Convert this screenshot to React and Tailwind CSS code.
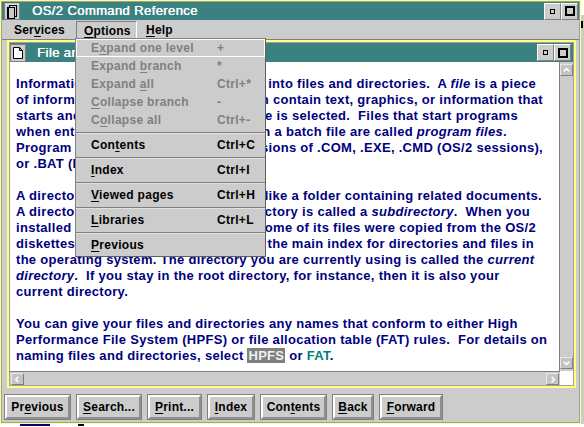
import React from "react";

const TEAL = "bg-[#3a8282]";
const YELLOW = "bg-[#ffff80]";

function U({ children }) {
  return <span className="underline underline-offset-2 decoration-1">{children}</span>;
}

function FrameButton({ big }) {
  return (
    <div className="w-[17px] h-[17px] bg-[#cccccc] border border-t-white border-l-white border-r-[#808080] border-b-[#808080] flex items-center justify-center">
      {big ? (
        <div className="w-[10px] h-[10px] border-2 border-black" />
      ) : (
        <div className="w-[5px] h-[5px] border border-black" />
      )}
    </div>
  );
}

function BookIcon() {
  return (
    <svg width="16" height="17" viewBox="0 0 16 17">
      <rect x="0.5" y="0.5" width="15" height="16" fill="#cccccc" stroke="#808080" />
      <path d="M1 1h14" stroke="#ffffff" />
      <rect x="5.5" y="2.5" width="7" height="11" fill="#cccccc" stroke="#000" />
      <rect x="3.5" y="4.5" width="7" height="11" fill="#cccccc" stroke="#000" />
      <path d="M4.5 5v10" stroke="#000" />
    </svg>
  );
}

function DocIcon() {
  return (
    <svg width="16" height="18" viewBox="0 0 16 18">
      <rect x="0.5" y="0.5" width="15" height="17" fill="#cccccc" stroke="#808080" />
      <path d="M3.5 3.5h6l3 3v8h-9z M9.5 3.5v3h3" fill="#ffffff" stroke="#000" />
    </svg>
  );
}

function ArrowBtn({ dir }) {
  const paths = {
    up: "M3 7l3-3 3 3",
    down: "M3 4l3 3 3-3",
    left: "M7 3l-3 3 3 3",
    right: "M5 3l3 3-3 3",
  };
  return (
    <div className="w-[13px] h-[12px] bg-[#c4c4c4] border border-t-[#e8e8e8] border-l-[#e8e8e8] border-r-[#808080] border-b-[#808080] flex items-center justify-center">
      <svg width="11" height="10" viewBox="0 0 12 11">
        <path d={paths[dir]} fill="none" stroke="#ffffff" strokeWidth="1.6" />
      </svg>
    </div>
  );
}

const MENU = [
  { label: <>E<U>x</U>pand one level</>, key: "+", off: true, sel: true },
  { label: <>Expand <U>b</U>ranch</>, key: "*", off: true },
  { label: <>Expand <U>a</U>ll</>, key: "Ctrl+*", off: true },
  { label: <><U>C</U>ollapse branch</>, key: "-", off: true },
  { label: <>C<U>o</U>llapse all</>, key: "Ctrl+-", off: true, sepAfter: true },
  { label: <>Con<U>t</U>ents</>, key: "Ctrl+C", sepAfter: true },
  { label: <><U>I</U>ndex</>, key: "Ctrl+I", sepAfter: true },
  { label: <><U>V</U>iewed pages</>, key: "Ctrl+H", sepAfter: true },
  { label: <><U>L</U>ibraries</>, key: "Ctrl+L", sepAfter: true },
  { label: <><U>P</U>revious</>, key: "" },
];

const BUTTONS = [
  { w: "w-[67px]", label: <>Pr<U>e</U>vious</> },
  { w: "w-[66px]", label: <><U>S</U>earch...</> },
  { w: "w-[55px]", label: <><U>P</U>rint...</> },
  { w: "w-[48px]", label: <><U>I</U>ndex</> },
  { w: "w-[67px]", label: <>Con<U>t</U>ents</> },
  { w: "w-[42px]", label: <><U>B</U>ack</> },
  { w: "w-[64px]", label: <><U>F</U>orward</> },
];

const I = ({ children }) => <i className="italic">{children}</i>;

// lines partly covered by the pull-down: [width of line, text before and under the menu, text after it]
const SPLIT = [
  ["w-[520px]", "Information on your disks is organized ", <>into files and directories.  A <I>file</I> is a piece</>],
  ["w-[527px]", "of information that is stored on a disk.  Files ca", <>n contain text, graphics, or information that</>],
  ["w-[502px]", "starts and runs a program when its nam", <>e is selected.  Files that start programs</>],
  ["w-[491px]", "when entered at the command prompt or included i", <>n a batch file are called <I>program files</I>.</>],
  ["w-[527px]", "Program files have the file name exten", <>sions of .COM, .EXE, .CMD (OS/2 sessions),</>],
  ["w-[160px]", "or .BAT (DOS sessions).", null],
  null,
  ["w-[526px]", "A directory is a storage area that is ", <>like a folder containing related documents.</>],
  ["w-[514px]", "A directory that is within another dire", <>ctory is called a <I>subdirectory</I>.  When you</>],
  ["w-[520px]", "installed OS/2 on your computer, s", <>ome of its files were copied from the OS/2</>],
  ["w-[518px]", "diskettes into directories.  This i", <>s the main index for directories and files in</>],
];

const PLAIN = [
  <>the operating system. The directory you are currently using is called the <I>current</I></>,
  <><I>directory</I>.  If you stay in the root directory, for instance, then it is also your</>,
  <>current directory.</>,
  <>&nbsp;</>,
  <>You can give your files and directories any names that conform to either High</>,
  <>Performance File System (HPFS) or file allocation table (FAT) rules.  For details on</>,
  <>naming files and directories, select <span className="bg-[#808080] text-[#f0f0f0] px-px">HPFS</span> or <span className="text-[#008080]">FAT</span>.</>,
];

export default function App() {
  return (
    <div className="relative w-[584px] h-[427px] overflow-hidden bg-white font-['Liberation_Sans',Arial,sans-serif] text-[12px] font-bold">
      <div className="flex h-[424px]">
        {/* main window */}
        <div className={`w-[581px] h-[424px] p-px ${YELLOW}`}>
          <div className="h-full bg-[#cccccc] border border-[#a0a0a0] flex flex-col">
            {/* title bar */}
            <div className={`h-[18px] flex items-center ${TEAL}`}>
              <div className="ml-[2px]"><BookIcon /></div>
              <div className="ml-[12px] text-white text-[13px] font-normal tracking-[0.4px] [text-shadow:0.5px_0_0_#fff]">OS/2 Command Reference</div>
              <div className="ml-auto mr-[1px] flex">
                <FrameButton />
                <FrameButton big />
              </div>
            </div>
            {/* menu bar */}
            <div className="h-[20px] flex items-center border-b border-[#808080] text-black tracking-[0.2px]">
              <div className="ml-[12px] w-[62px]">Ser<U>v</U>ices</div>
              <div className="h-[19px] w-[61px] mt-px flex items-center pl-[7px] border-t border-l border-t-[#808080] border-l-[#808080] border-r border-r-white">
                <U>O</U>ptions
              </div>
              <div className="ml-[9px]"><U>H</U>elp</div>
            </div>
            {/* client */}
            <div className="flex-1 flex flex-col">
              <div className={`ml-[5px] mr-[3px] h-[348px] p-[2px] ${YELLOW}`}>
                <div className="h-full bg-[#cccccc] border border-[#a0a0a0] flex flex-col">
                  <div className={`h-[19px] flex items-center ${TEAL}`}>
                    <div className="ml-0"><DocIcon /></div>
                    <div className="ml-[11px] text-white text-[13px] font-normal tracking-[0.4px] [text-shadow:0.5px_0_0_#fff]">File and directory names</div>
                    <div className="ml-auto mr-[2px] flex">
                      <FrameButton />
                      <FrameButton big />
                    </div>
                  </div>
                  <div className="flex-1 flex">
                    <div className="flex-1 bg-white border-r border-[#808080] pl-[6px] pt-[14px] text-[#000080] text-[13px] tracking-[0.3px] leading-[16px]">
                      {SPLIT.map((l, i) =>
                        l ? (
                          <div key={i} className={`${l[0]} h-[16px] flex whitespace-pre`}>
                            <div className="flex-1 min-w-0 overflow-hidden">{l[1]}</div>
                            {l[2] && <div className="shrink-0">{l[2]}</div>}
                          </div>
                        ) : (
                          <div key={i} className="h-[16px]" />
                        )
                      )}
                      {PLAIN.map((l, i) => (
                        <div key={"p" + i} className="whitespace-pre h-[16px]">{l}</div>
                      ))}
                    </div>
                    <div className="w-[13px] bg-[#cccccc] flex flex-col justify-between py-[2px]">
                      <ArrowBtn dir="up" />
                      <ArrowBtn dir="down" />
                    </div>
                  </div>
                  <div className="h-[14px] flex">
                    <div className="flex-1 bg-[#cccccc] border-t border-[#808080] flex items-center justify-between px-px">
                      <ArrowBtn dir="left" />
                      <ArrowBtn dir="right" />
                    </div>
                    <div className="w-[13px] bg-white" />
                  </div>
                </div>
              </div>
              {/* push buttons */}
              <div className="flex gap-[5px] pl-[2px] pt-[6px] text-black tracking-[0.2px]">
                {BUTTONS.map((b, i) => (
                  <div key={i} className={`${b.w} h-[26px] border border-[#808080] bg-[#cccccc]`}>
                    <div className="h-full border-2 border-t-white border-l-white border-r-[#909090] border-b-[#909090] flex items-center justify-center">
                      {b.label}
                    </div>
                  </div>
                ))}
              </div>
            </div>
          </div>
        </div>
        {/* window behind on the right */}
        <div className="w-[3px] bg-[#cccccc] flex flex-col">
          <div className="h-[15px] bg-white" />
          <div className="mt-[6px] h-[7px] w-[2px] bg-black" />
        </div>
      </div>
      {/* window behind at the bottom */}
      <div className="h-[3px] flex items-start">
        <div className="ml-[20px] w-[30px] h-[2px] bg-[#000080]" />
        <div className="ml-[28px] w-[6px] h-[2px] bg-black" />
      </div>

      {/* Options pull-down menu */}
      <div className="absolute left-[75px] top-[38px] w-[191px] bg-[#cccccc] border border-[#808080] border-r-[#606060] border-b-[#606060] pb-[2px] tracking-[0.3px]">
        {MENU.map((m, i) => (
          <React.Fragment key={i}>
            <div className={`h-[18px] flex items-center pl-[15px] ${m.off ? "text-[#808080]" : "text-black"} ${m.sel ? "outline outline-1 outline-white -outline-offset-1" : ""}`}>
              <div className="w-[126px]">{m.label}</div>
              <div>{m.key}</div>
            </div>
            {m.sepAfter && (
              <div className="h-[7px] flex items-center">
                <div className="w-full h-[2px] border-t border-[#808080] border-b border-b-[#e0e0e0]" />
              </div>
            )}
          </React.Fragment>
        ))}
      </div>
    </div>
  );
}
